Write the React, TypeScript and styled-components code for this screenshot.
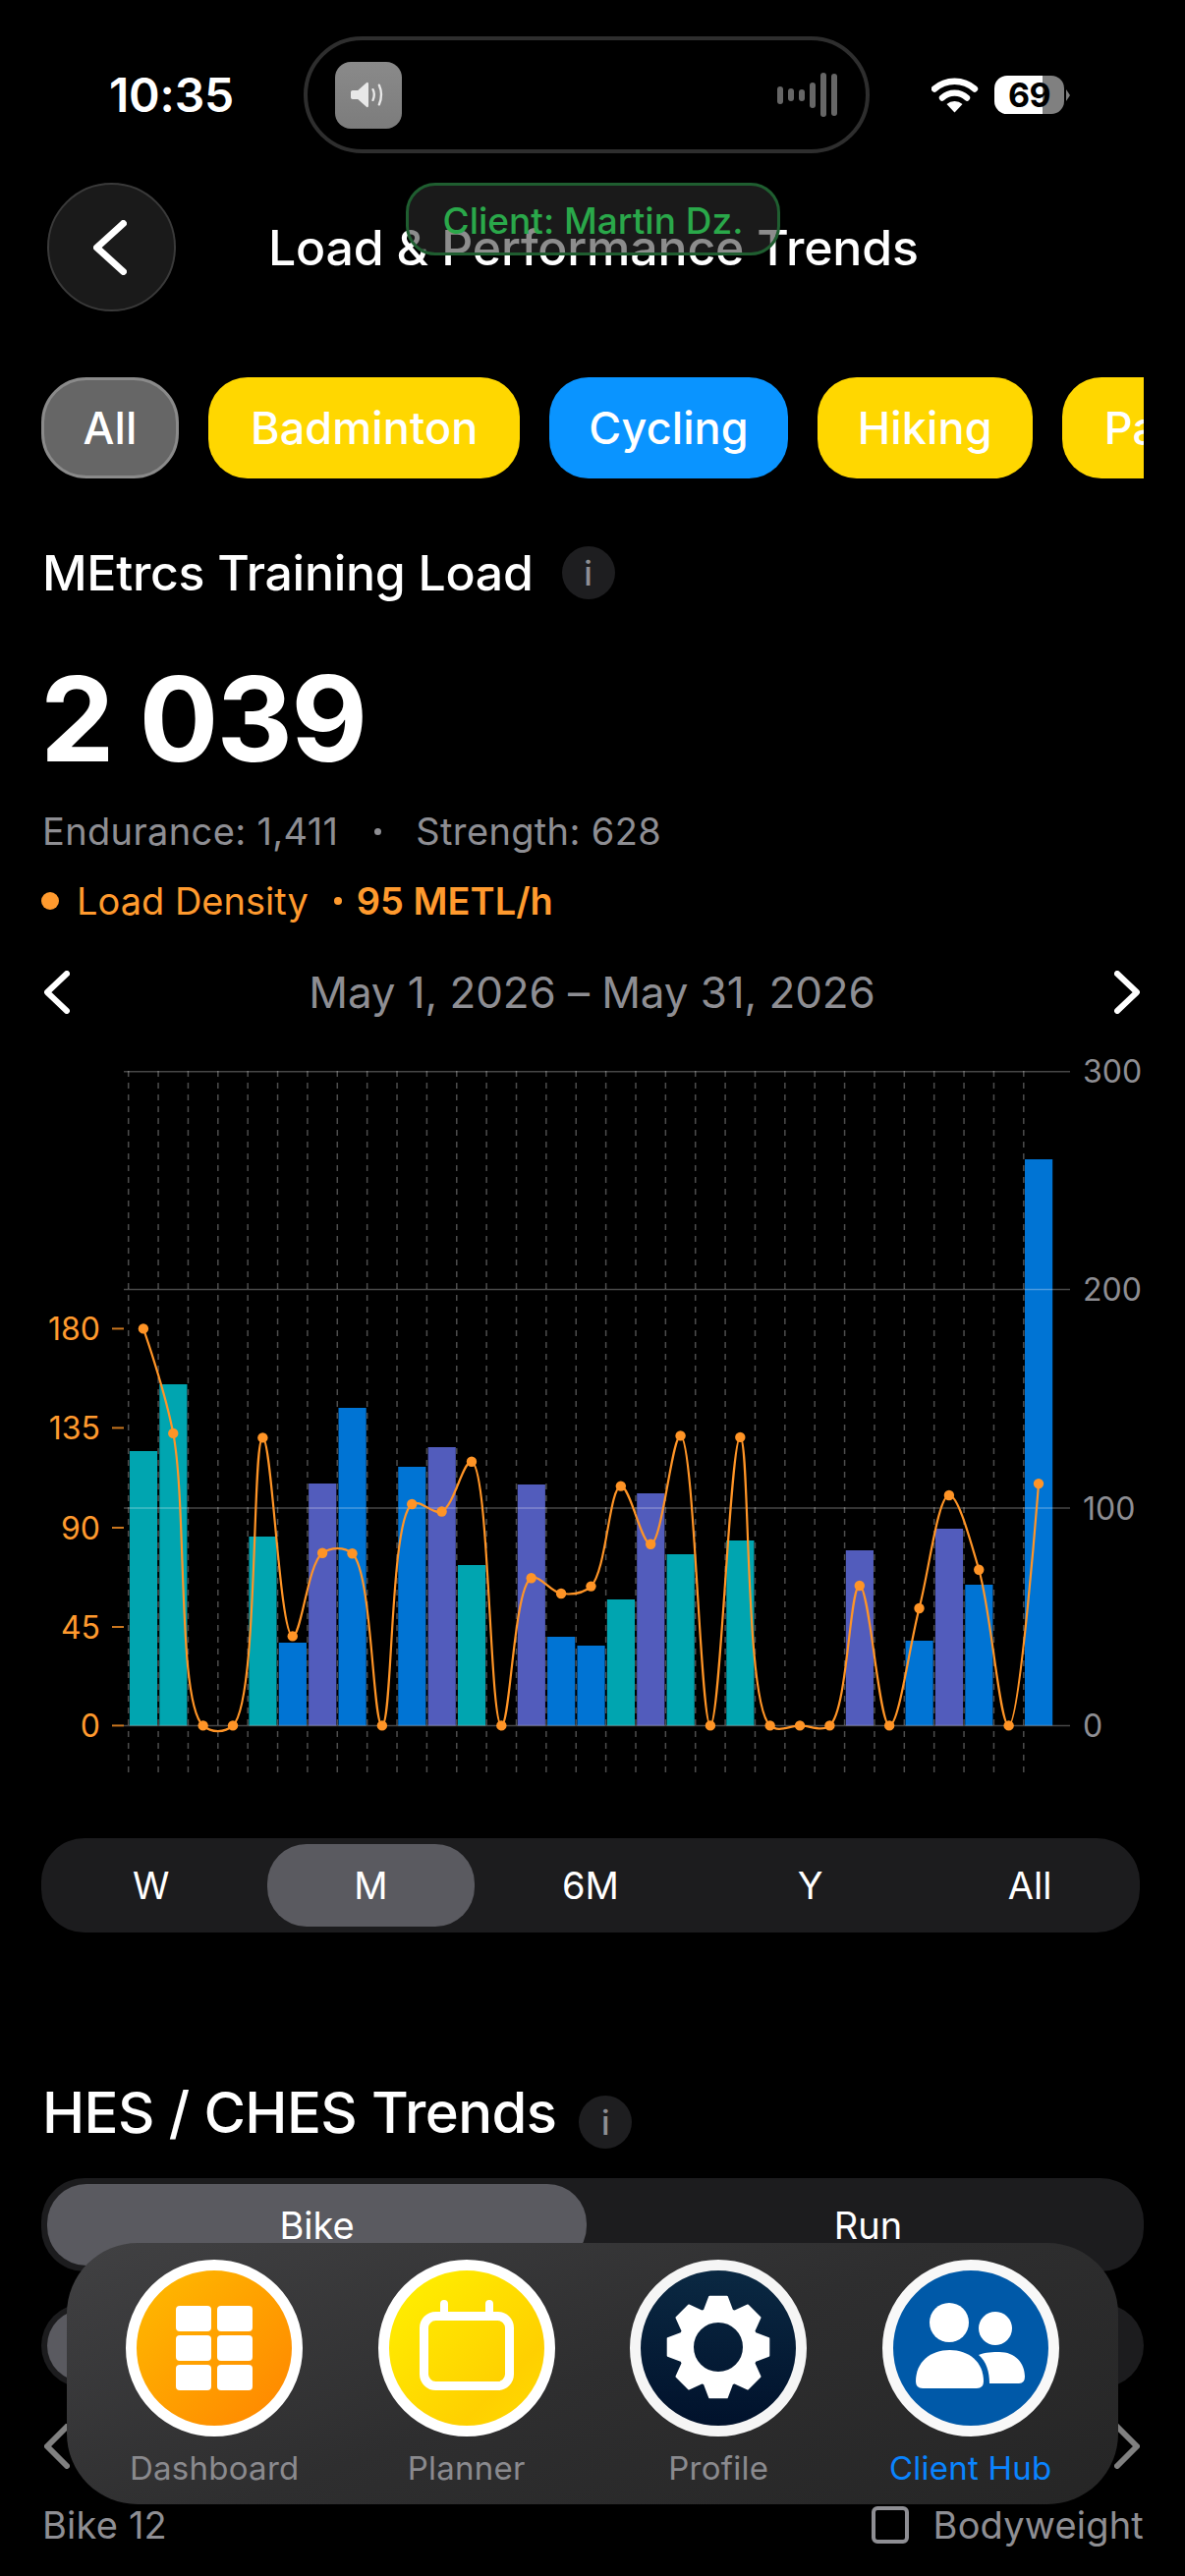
import styled, { createGlobalStyle } from "styled-components";

const GlobalStyle = createGlobalStyle`
  html, body {
    margin: 0;
    padding: 0;
    background: #000;
    font-family: Inter, "Noto Sans", sans-serif;
    color: #fff;
  }
`;

type BarKind = "teal" | "blue" | "purple";

const barColors: Record<BarKind, string> = {
  teal: "#00a5b0",
  blue: "#0074d4",
  purple: "#525cbc",
};

const bars: { slot: number; top: number; kind: BarKind }[] = [
  { slot: 0, top: 1477, kind: "teal" },
  { slot: 1, top: 1409, kind: "teal" },
  { slot: 4, top: 1564, kind: "teal" },
  { slot: 5, top: 1672, kind: "blue" },
  { slot: 6, top: 1510, kind: "purple" },
  { slot: 7, top: 1433, kind: "blue" },
  { slot: 9, top: 1493, kind: "blue" },
  { slot: 10, top: 1473, kind: "purple" },
  { slot: 11, top: 1593, kind: "teal" },
  { slot: 13, top: 1511, kind: "purple" },
  { slot: 14, top: 1666, kind: "blue" },
  { slot: 15, top: 1675, kind: "blue" },
  { slot: 16, top: 1628, kind: "teal" },
  { slot: 17, top: 1520, kind: "purple" },
  { slot: 18, top: 1582, kind: "teal" },
  { slot: 20, top: 1568, kind: "teal" },
  { slot: 24, top: 1578, kind: "purple" },
  { slot: 26, top: 1670, kind: "blue" },
  { slot: 27, top: 1556, kind: "purple" },
  { slot: 28, top: 1613, kind: "blue" },
  { slot: 30, top: 1180, kind: "blue" },
];

const BASE = 1756.4;
const lineY = [
  1352.4, 1458.9, BASE, BASE, 1463.4, 1665.4, 1580.8, 1581.3, BASE, 1531, 1538.5, 1487.8, BASE,
  1606.2, 1622, 1614.6, 1512.6, 1571.8, 1461.4, BASE, 1462.9, BASE, BASE, BASE, 1614, BASE, 1637,
  1522, 1597.7, BASE, 1510.1,
];

const SLOT_X = 130.7;
const SLOT_W = 30.37;
const points = lineY.map((y, i) => ({ x: SLOT_X + 15.2 + SLOT_W * i, y }));

// centripetal catmull-rom, same shape the chart library draws
function splinePath(pts: { x: number; y: number }[]) {
  const dist = (a: { x: number; y: number }, b: { x: number; y: number }) =>
    Math.max(Math.sqrt(Math.hypot(a.x - b.x, a.y - b.y)), 0.001);
  let d = `M${pts[0].x} ${pts[0].y}`;
  for (let i = 0; i < pts.length - 1; i++) {
    const p0 = pts[Math.max(i - 1, 0)];
    const p1 = pts[i];
    const p2 = pts[i + 1];
    const p3 = pts[Math.min(i + 2, pts.length - 1)];
    const d1 = i === 0 ? 0 : dist(p0, p1);
    const d2 = dist(p1, p2);
    const d3 = i === pts.length - 2 ? 0 : dist(p2, p3);
    let c1 = { x: p1.x, y: p1.y };
    let c2 = { x: p2.x, y: p2.y };
    if (d1 > 0) {
      const a = 2 * d1 * d1 + 3 * d1 * d2 + d2 * d2;
      const n = 3 * d1 * (d1 + d2);
      c1 = {
        x: (a * p1.x - d2 * d2 * p0.x + d1 * d1 * p2.x) / n,
        y: (a * p1.y - d2 * d2 * p0.y + d1 * d1 * p2.y) / n,
      };
    }
    if (d3 > 0) {
      const a = 2 * d3 * d3 + 3 * d3 * d2 + d2 * d2;
      const n = 3 * d3 * (d3 + d2);
      c2 = {
        x: (a * p2.x - d2 * d2 * p3.x + d3 * d3 * p1.x) / n,
        y: (a * p2.y - d2 * d2 * p3.y + d3 * d3 * p1.y) / n,
      };
    }
    d += `C${c1.x} ${c1.y} ${c2.x} ${c2.y} ${p2.x} ${p2.y}`;
  }
  return d;
}

function gearPath(cx: number, cy: number) {
  const teeth = 8;
  const outer = 52;
  const root = 40;
  let d = "";
  for (let i = 0; i < teeth; i++) {
    const a = (i * Math.PI * 2) / teeth;
    const pts = [
      [root, a - 0.36],
      [outer, a - 0.17],
      [outer, a + 0.17],
      [root, a + 0.36],
    ];
    pts.forEach(([r, t], j) => {
      const x = cx + r * Math.sin(t);
      const y = cy - r * Math.cos(t);
      d += `${i === 0 && j === 0 ? "M" : "L"}${x.toFixed(1)} ${y.toFixed(1)}`;
    });
  }
  d += `Z M${cx - 26} ${cy} a26 26 0 1 0 52 0 a26 26 0 1 0 -52 0Z`;
  return d;
}

function Chevron({ dir, w, h, stroke, color }: { dir: "left" | "right"; w: number; h: number; stroke: number; color: string }) {
  const inset = stroke / 2;
  const pts =
    dir === "left"
      ? `${w - inset},${inset} ${inset},${h / 2} ${w - inset},${h - inset}`
      : `${inset},${inset} ${w - inset},${h / 2} ${inset},${h - inset}`;
  return (
    <svg width={w} height={h} viewBox={`0 0 ${w} ${h}`} fill="none">
      <polyline points={pts} stroke={color} strokeWidth={stroke} strokeLinecap="round" strokeLinejoin="round" />
    </svg>
  );
}

function TrainingChart() {
  const axisX = [0, 1, 2, 3, 4, 5, 6, 7, 8, 9, 10, 11, 12, 13, 14, 15, 16, 17, 18, 19, 20, 21, 22, 23, 24, 25, 26, 27, 28, 29, 30];
  return (
    <ChartSvg viewBox="0 1070 1206 760" width={1206} height={760}>
      {bars.map((b) => (
        <rect
          key={b.slot}
          x={SLOT_X + SLOT_W * b.slot + 1.2}
          y={b.top}
          width={28.2}
          height={BASE - b.top}
          fill={barColors[b.kind]}
        />
      ))}
      {axisX.map((i) => (
        <line
          key={i}
          x1={SLOT_X + SLOT_W * i}
          x2={SLOT_X + SLOT_W * i}
          y1={1090}
          y2={1805}
          stroke="#4d4d4d"
          strokeWidth={1.5}
          strokeDasharray="6 6"
        />
      ))}
      {[1090.7, 1312.6, 1535, 1756.4].map((y) => (
        <line key={y} x1={126} x2={1089} y1={y} y2={y} stroke="rgba(255,255,255,0.28)" strokeWidth={1.5} />
      ))}
      {[
        ["300", 1090.7],
        ["200", 1312.6],
        ["100", 1535],
        ["0", 1756.4],
      ].map(([label, y]) => (
        <RightLabel key={label} x={1102} y={Number(y) + 11.5}>
          {label}
        </RightLabel>
      ))}
      {[
        ["180", 1352.4],
        ["135", 1453.4],
        ["90", 1555],
        ["45", 1656],
        ["0", 1756.4],
      ].map(([label, y]) => (
        <g key={label}>
          <LeftLabel x={102} y={Number(y) + 11.5}>
            {label}
          </LeftLabel>
          <line x1={114} x2={126} y1={Number(y)} y2={Number(y)} stroke="#c9761f" strokeWidth={2} />
        </g>
      ))}
      <path d={splinePath(points)} fill="none" stroke="#ff9426" strokeWidth={2.2} />
      {points.map((p, i) => (
        <circle key={i} cx={p.x} cy={p.y} r={5.2} fill="#ff9426" />
      ))}
    </ChartSvg>
  );
}

export default function App() {
  return (
    <Screen>
      <GlobalStyle />
      <StatusBar>
        <Clock>10:35</Clock>
        <Island>
          <SoundTile>
            <svg width="40" height="32" viewBox="0 0 40 32" fill="none">
              <path d="M2 11h6l10-9q2-1 2 2v24q0 3-2 2L8 21H2q-2 0-2-2v-6q0-2 2-2z" fill="#e8e8e8" />
              <path d="M25 10q3 6 0 12" stroke="#e8e8e8" strokeWidth="2.6" strokeLinecap="round" />
              <path d="M32 5q5 11 0 22" stroke="#e8e8e8" strokeWidth="2.6" strokeLinecap="round" />
            </svg>
          </SoundTile>
          <Levels>
            {[18, 13, 12, 26, 45, 43].map((h, i) => (
              <LevelBar key={i} style={{ height: h }} />
            ))}
          </Levels>
        </Island>
        <StatusIcons>
          <svg width="48" height="36" viewBox="0 0 48 36" fill="none">
            <path d="M3 11.5a31 31 0 0 1 41 0" stroke="#fff" strokeWidth="6.4" strokeLinecap="round" />
            <path d="M11 20.5a18.5 18.5 0 0 1 25 0" stroke="#fff" strokeWidth="6.4" strokeLinecap="round" />
            <path d="M23.5 35.5L15.5 27a12 12 0 0 1 16 0z" fill="#fff" />
          </svg>
          <Battery>69</Battery>
          <BatteryNub />
        </StatusIcons>
      </StatusBar>

      <Header>
        <BackButton>
          <Chevron dir="left" w={34} h={56} stroke={7} color="#fff" />
        </BackButton>
        <PageTitle>Load &amp; Performance Trends</PageTitle>
        <ClientChip>Client: Martin Dz.</ClientChip>
      </Header>

      <FilterRow>
        <AllChip>All</AllChip>
        <SportChip $bg="#ffd700" $pad={43}>Badminton</SportChip>
        <SportChip $bg="#0a94ff" $pad={40}>Cycling</SportChip>
        <SportChip $bg="#ffd700" $pad={41}>Hiking</SportChip>
        <SportChip $bg="#ffd700" $pad={43}>Padel</SportChip>
      </FilterRow>

      <MetricHeading>
        <MetricTitle>MEtrcs Training Load</MetricTitle>
        <InfoBadge>i</InfoBadge>
      </MetricHeading>
      <BigNumber>2 039</BigNumber>
      <Breakdown>
        <span>Endurance: 1,411</span>
        <BreakdownDot />
        <span>Strength: 628</span>
      </Breakdown>
      <DensityRow>
        <DensityDot />
        <span>Load Density</span>
        <DensitySep />
        <strong>95 METL/h</strong>
      </DensityRow>

      <DateRow>
        <Chevron dir="left" w={26} h={44} stroke={6} color="#fff" />
        <DateLabel>May 1, 2026 – May 31, 2026</DateLabel>
        <Chevron dir="right" w={26} h={44} stroke={6} color="#fff" />
      </DateRow>

      <TrainingChart />

      <RangeControl>
        <Segment>W</Segment>
        <Segment $active>M</Segment>
        <Segment>6M</Segment>
        <Segment>Y</Segment>
        <Segment>All</Segment>
      </RangeControl>

      <TrendsHeading>
        <TrendsTitle>HES / CHES Trends</TrendsTitle>
        <TrendsInfo>i</TrendsInfo>
      </TrendsHeading>

      <SportControl>
        <Segment $active>Bike</Segment>
        <Segment>Run</Segment>
      </SportControl>
      <ZoneControl>
        <Segment $active />
        <Segment />
      </ZoneControl>

      <PagerRow>
        <Chevron dir="left" w={26} h={46} stroke={6} color="#808080" />
        <Chevron dir="right" w={26} h={46} stroke={6} color="#808080" />
      </PagerRow>

      <FooterRow>
        <span>Bike 12</span>
        <CheckLabel>
          <CheckBox />
          Bodyweight
        </CheckLabel>
      </FooterRow>

      <TabBar>
        <TabItem>
          <TabCircle $bg="linear-gradient(135deg, #ffb900 10%, #ff8a00 85%)">
            <svg width="158" height="156" viewBox="0 0 158 156" fill="#fff">
              {[36, 66, 96].map((y) =>
                [40, 82].map((x) => <rect key={`${x}-${y}`} x={x} y={y} width="36" height="26" rx="4" />)
              )}
            </svg>
          </TabCircle>
          <TabLabel>Dashboard</TabLabel>
        </TabItem>
        <TabItem>
          <TabCircle $bg="linear-gradient(135deg, #fff000 10%, #ffd000 70%, #ffdc00)">
            <svg width="158" height="156" viewBox="0 0 158 156" fill="none" stroke="#fff">
              <rect x="35.5" y="46.5" width="87" height="71" rx="12" strokeWidth="9" />
              <path d="M56 45V34M102 45V34" strokeWidth="8" strokeLinecap="round" />
            </svg>
          </TabCircle>
          <TabLabel>Planner</TabLabel>
        </TabItem>
        <TabItem>
          <TabCircle $bg="linear-gradient(180deg, #0b2a44, #00102a)" $ring="#f5f5f5">
            <svg width="158" height="156" viewBox="0 0 158 156">
              <path d={gearPath(79, 78)} fill="#fff" fillRule="evenodd" stroke="#fff" strokeWidth="2" strokeLinejoin="round" />
            </svg>
          </TabCircle>
          <TabLabel>Profile</TabLabel>
        </TabItem>
        <TabItem>
          <TabCircle $bg="#0059a8" $ring="#f8f8f8">
            <svg width="158" height="156" viewBox="0 0 158 156" fill="#fff">
              <circle cx="57" cy="53" r="20" />
              <circle cx="104" cy="59" r="17" />
              <path d="M23 113C23 93 38 81 57.5 81C77 81 92 93 92 113Q92 120 85 120H30Q23 120 23 113Z" />
              <path d="M87 86C94 83 102 83 108 83C124 83 134 94 134 108Q134 115 128 115H98C98 103 95 93 87 86Z" />
            </svg>
          </TabCircle>
          <TabLabel $active>Client Hub</TabLabel>
        </TabItem>
      </TabBar>
    </Screen>
  );
}

const Screen = styled.div`
  position: relative;
  display: flex;
  flex-direction: column;
  width: 1206px;
  height: 2622px;
  overflow: hidden;
  background: #000;
`;

const StatusBar = styled.div`
  display: flex;
  align-items: center;
  height: 119px;
  margin-top: 37px;
  padding-left: 111px;
`;

const Clock = styled.div`
  width: 198px;
  font-size: 48px;
  font-weight: 600;
  letter-spacing: -0.2px;
`;

const Island = styled.div`
  display: flex;
  align-items: center;
  justify-content: space-between;
  box-sizing: border-box;
  width: 576px;
  height: 119px;
  padding: 0 29px 0 28px;
  border: 4px solid #2e2e2e;
  border-radius: 60px;
`;

const SoundTile = styled.div`
  display: flex;
  align-items: center;
  justify-content: center;
  width: 68px;
  height: 68px;
  border-radius: 16px;
  background: linear-gradient(180deg, #8a8a8a, #7c7c7c);

  svg {
    width: 36px;
    height: 29px;
  }
`;

const Levels = styled.div`
  display: flex;
  align-items: center;
  gap: 5px;
`;

const LevelBar = styled.div`
  width: 6px;
  border-radius: 3px;
  background: #666;
`;

const StatusIcons = styled.div`
  display: flex;
  align-items: center;
  margin-left: 63px;
`;

const Battery = styled.div`
  display: flex;
  align-items: center;
  justify-content: center;
  width: 71px;
  height: 39px;
  margin-left: 16px;
  border-radius: 13px;
  background: linear-gradient(90deg, #fff 69%, #808080 69%);
  color: #000;
  font-size: 34px;
  font-weight: 700;
  letter-spacing: -0.5px;
`;

const BatteryNub = styled.div`
  width: 0;
  height: 0;
  margin-left: 2px;
  border-top: 6px solid transparent;
  border-bottom: 6px solid transparent;
  border-left: 4px solid #808080;
`;

const Header = styled.div`
  position: relative;
  display: flex;
  align-items: center;
  height: 131px;
  margin-top: 30px;
  padding-left: 48px;
`;

const BackButton = styled.div`
  display: flex;
  align-items: center;
  justify-content: center;
  box-sizing: border-box;
  width: 131px;
  height: 131px;
  padding-right: 4px;
  border: 2px solid #3a3a3a;
  border-radius: 50%;
  background: #1a1a1a;
`;

const PageTitle = styled.div`
  margin-left: 94px;
  font-size: 50px;
  font-weight: 500;
  letter-spacing: -0.2px;
  line-height: 60px;
`;

const ClientChip = styled.div`
  position: absolute;
  top: 0;
  left: 413px;
  box-sizing: border-box;
  width: 381px;
  height: 74px;
  padding-top: 15px;
  border: 3px solid #1f5e30;
  border-radius: 30px;
  background: rgba(47, 47, 47, 0.55);
  color: #2aa84a;
  font-size: 37px;
  font-weight: 500;
  line-height: 42px;
  text-align: center;
`;

const FilterRow = styled.div`
  display: flex;
  gap: 30px;
  width: 1122px;
  height: 103px;
  margin: 67px 0 0 42px;
  overflow: hidden;
`;

const SportChip = styled.div<{ $bg: string; $pad?: number }>`
  display: flex;
  flex: none;
  align-items: center;
  padding: 0 ${(p) => p.$pad ?? 0}px;
  border-radius: 40px;
  background: ${(p) => p.$bg};
  font-size: 45px;
  font-weight: 500;
  letter-spacing: 0.1px;
`;

const AllChip = styled(SportChip).attrs({ $bg: "#666" })`
  box-sizing: border-box;
  width: 140px;
  justify-content: center;
  border: 3px solid #8a8a8a;
  border-radius: 46px;
`;

const MetricHeading = styled.div`
  display: flex;
  align-items: center;
  gap: 29px;
  height: 54px;
  margin-top: 69px;
  padding-left: 43px;
`;

const MetricTitle = styled.div`
  font-size: 50px;
  font-weight: 500;
  letter-spacing: -0.3px;
`;

const InfoBadge = styled.div`
  display: flex;
  align-items: center;
  justify-content: center;
  width: 54px;
  height: 54px;
  border-radius: 50%;
  background: #1e1e20;
  color: #8e8e93;
  font-size: 34px;
  font-weight: 500;
`;

const BigNumber = styled.div`
  margin: 62px 0 0 41px;
  font-size: 120px;
  font-weight: 700;
  letter-spacing: -1.8px;
  line-height: 120px;
`;

const Breakdown = styled.div`
  display: flex;
  align-items: center;
  height: 46px;
  margin: 31px 0 0 43px;
  color: #8e8e93;
  font-size: 38px;
  letter-spacing: 0.35px;
`;

const BreakdownDot = styled.div`
  width: 7px;
  height: 7px;
  margin: 0 35px 0 37px;
  border-radius: 50%;
  background: #8e8e93;
`;

const DensityRow = styled.div`
  display: flex;
  align-items: center;
  height: 46px;
  margin: 25px 0 0 42px;
  color: #ff9a2e;
  font-size: 38px;

  strong {
    font-weight: 600;
  }
`;

const DensityDot = styled.div`
  width: 18px;
  height: 18px;
  margin-right: 18px;
  border-radius: 50%;
  background: #ff9a2e;
`;

const DensitySep = styled.div`
  width: 8px;
  height: 8px;
  margin: 0 15px 0 26px;
  border-radius: 50%;
  background: #ff9a2e;
`;

const DateRow = styled.div`
  display: flex;
  align-items: center;
  justify-content: space-between;
  height: 44px;
  margin-top: 48px;
  padding: 0 46px 0 45px;
`;

const DateLabel = styled.div`
  color: #8e8e93;
  font-size: 44px;
  letter-spacing: -0.1px;
`;

const ChartSvg = styled.svg`
  display: block;
  flex: none;
  margin-top: 38px;
`;

const RightLabel = styled.text`
  fill: #8e8e93;
  font-family: Inter, sans-serif;
  font-size: 32px;
`;

const LeftLabel = styled.text`
  fill: #ff9a2e;
  font-family: Inter, sans-serif;
  font-size: 32px;
  text-anchor: end;
`;

const SegmentTrack = styled.div`
  display: flex;
  flex: none;
  box-sizing: border-box;
  width: 1120px;
  margin-left: 42px;
  border-radius: 44px;
  background: #1c1c1e;
`;

const RangeControl = styled(SegmentTrack)`
  width: 1118px;
  height: 96px;
  margin-top: 41px;
`;

const SportControl = styled(SegmentTrack)`
  width: 1122px;
  height: 95px;
  margin-top: 30px;
`;

const ZoneControl = styled(SegmentTrack)`
  width: 1122px;
  height: 85px;
  margin-top: 33px;
`;

const Segment = styled.div<{ $active?: boolean }>`
  display: flex;
  flex: 1;
  align-items: center;
  justify-content: center;
  margin: 6px;
  border-radius: 40px;
  background: ${(p) => (p.$active ? "#5a5a60" : "transparent")};
  font-size: 38px;
`;

const TrendsHeading = styled.div`
  display: flex;
  flex: none;
  align-items: flex-start;
  gap: 23px;
  height: 64px;
  margin-top: 156px;
  padding-left: 43px;
`;

const TrendsTitle = styled.div`
  font-size: 58px;
  font-weight: 500;
  letter-spacing: -0.6px;
  line-height: 54px;
`;

const TrendsInfo = styled(InfoBadge)`
  margin-top: 10px;
`;

const PagerRow = styled.div`
  display: flex;
  flex: none;
  align-items: center;
  justify-content: space-between;
  height: 46px;
  margin-top: 37px;
  padding: 0 46px 0 45px;
`;

const FooterRow = styled.div`
  display: flex;
  flex: none;
  align-items: center;
  justify-content: space-between;
  height: 46px;
  margin-top: 34px;
  padding: 0 42px 0 43px;
  color: #8e8e93;
  font-size: 38px;
  letter-spacing: 0.2px;
`;

const CheckLabel = styled.div`
  display: flex;
  align-items: center;
  gap: 25px;
`;

const CheckBox = styled.div`
  box-sizing: border-box;
  width: 38px;
  height: 38px;
  border: 4px solid #8e8e93;
  border-radius: 6px;
`;

const TabBar = styled.div`
  position: absolute;
  top: 2283px;
  left: 68px;
  display: grid;
  grid-template-columns: repeat(4, 1fr);
  box-sizing: border-box;
  width: 1070px;
  height: 266px;
  padding: 17px 22px 0;
  border-radius: 72px;
  background: linear-gradient(160deg, #414143, #2e2e2f 50%, #252525);
`;

const TabItem = styled.div`
  display: flex;
  flex-direction: column;
  align-items: center;
  gap: 12px;
`;

const TabCircle = styled.div<{ $bg: string; $ring?: string }>`
  display: flex;
  flex: none;
  box-sizing: border-box;
  width: 180px;
  height: 180px;
  border: 11px solid ${(p) => p.$ring ?? "#fff"};
  border-radius: 50%;
  background: ${(p) => p.$bg};
  background-origin: border-box;
`;

const TabLabel = styled.div<{ $active?: boolean }>`
  color: ${(p) => (p.$active ? "#0a84ff" : "#8a8a8e")};
  font-size: 33px;
  letter-spacing: 0.25px;
  line-height: 40px;
`;
